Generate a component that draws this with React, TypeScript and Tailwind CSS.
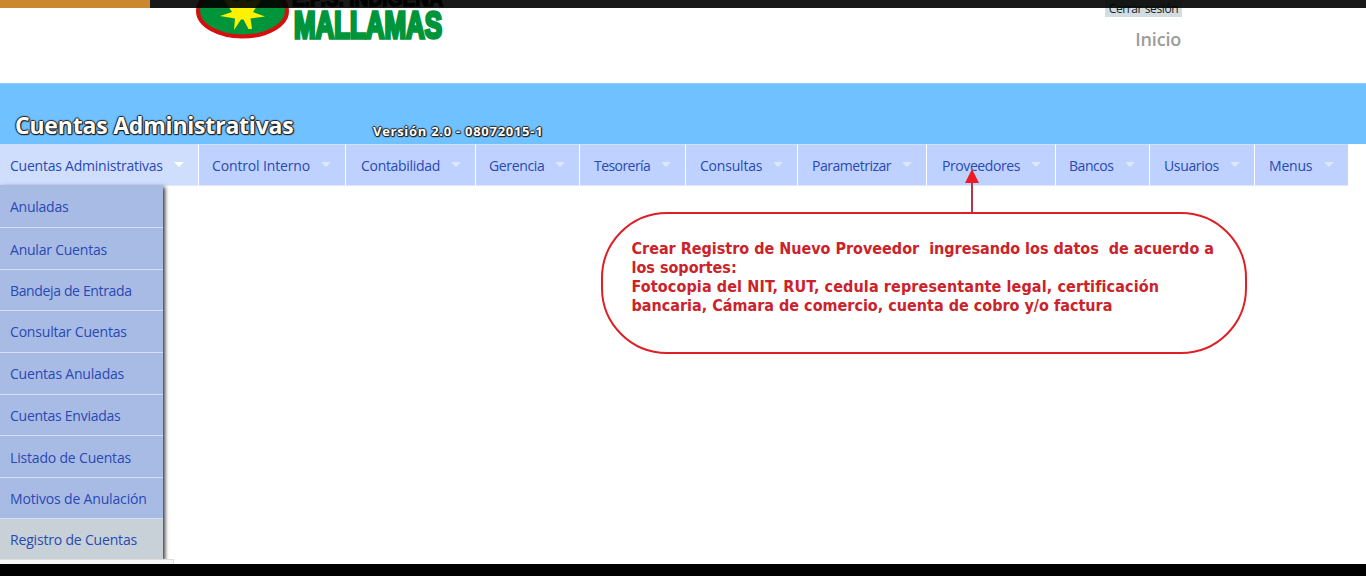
const menus = [
  { label: 'Cuentas Administrativas', cell: 'w-[199px] pl-[10px] bg-[#d0defe]', text: 'tracking-[-0.23px]', arrow: 'text-white' },
  { label: 'Control Interno', cell: 'w-[147px] pl-[13px] bg-[#bfd1fe]', text: 'tracking-[-0.15px]', arrow: 'text-[#dde8fd]' },
  { label: 'Contabilidad', cell: 'w-[130px] pl-[15px] bg-[#bfd1fe]', text: 'tracking-[-0.3px]', arrow: 'text-[#dde8fd]' },
  { label: 'Gerencia', cell: 'w-[104px] pl-[13px] bg-[#bfd1fe]', text: 'tracking-[-0.35px]', arrow: 'text-[#dde8fd]' },
  { label: 'Tesorería', cell: 'w-[106px] pl-[14px] bg-[#bfd1fe]', text: 'tracking-[-0.56px]', arrow: 'text-[#dde8fd]' },
  { label: 'Consultas', cell: 'w-[112px] pl-[14px] bg-[#bfd1fe]', text: 'tracking-[-0.2px]', arrow: 'text-[#dde8fd]' },
  { label: 'Parametrizar', cell: 'w-[129px] pl-[14px] bg-[#bfd1fe]', text: 'tracking-[-0.48px]', arrow: 'text-[#dde8fd]' },
  { label: 'Proveedores', cell: 'w-[129px] pl-[15px] bg-[#bfd1fe]', text: 'tracking-[-0.42px]', arrow: 'text-[#dde8fd]' },
  { label: 'Bancos', cell: 'w-[94px] pl-[13px] bg-[#bfd1fe]', text: 'tracking-[-0.45px]', arrow: 'text-[#dde8fd]' },
  { label: 'Usuarios', cell: 'w-[105px] pl-[14px] bg-[#bfd1fe]', text: 'tracking-[-0.35px]', arrow: 'text-[#dde8fd]' },
  { label: 'Menus', cell: 'w-[94px] pl-[14px] bg-[#bfd1fe]', text: 'tracking-[-0.2px]', arrow: 'text-[#dde8fd]' },
];

const entries = [
  { label: 'Anuladas', row: 'h-[43px] pt-px tracking-[-0.25px]' },
  { label: 'Anular Cuentas', row: 'h-[42px] pt-[2px] tracking-[-0.22px]' },
  { label: 'Bandeja de Entrada', row: 'h-[41px] tracking-[-0.36px]' },
  { label: 'Consultar Cuentas', row: 'h-[42px] tracking-[-0.19px]' },
  { label: 'Cuentas Anuladas', row: 'h-[42px] tracking-[-0.2px]' },
  { label: 'Cuentas Enviadas', row: 'h-[41px] tracking-[-0.26px]' },
  { label: 'Listado de Cuentas', row: 'h-[42px] pt-[2px] tracking-[-0.18px]' },
  { label: 'Motivos de Anulación', row: 'h-[41px] tracking-[-0.16px]' },
];

const outline =
  '[text-shadow:1px_0_1px_#222,-1px_0_1px_#222,0_1px_1px_#222,0_-1px_1px_#222,1px_1px_1px_#222]';

function Logo() {
  return (
    <svg width="270" height="50" viewBox="0 0 270 50" className="block">
      <ellipse cx="62.5" cy="11" rx="44.5" ry="25.5" fill="#00953b" stroke="#d80e0e" strokeWidth="4" />
      <path
        d="M62 -14L67 2L83 -3L73 12L85 16.500L70.500 18.500L72 29L68.500 29L63.500 19.500L61 19.500L54 30L55 18.500L40 16L52 12L42 -3L58 2Z"
        fill="#fff200"
      />
      <text
        x="112"
        y="5.5"
        textLength="151"
        lengthAdjust="spacingAndGlyphs"
        fill="#080808"
        stroke="#080808"
        strokeWidth="1.4"
        className="font-['Liberation_Sans',sans-serif] text-[22px] font-bold"
      >
        E.P.S. INDIGENA
      </text>
      <text
        x="114"
        y="38"
        textLength="148"
        lengthAdjust="spacingAndGlyphs"
        fill="#00953b"
        stroke="#00953b"
        strokeWidth="3.4"
        className="font-['Liberation_Sans',sans-serif] text-[37px] font-bold"
      >
        MALLAMAS
      </text>
    </svg>
  );
}

export default function App() {
  return (
    <div className="relative flex h-[576px] w-[1366px] flex-col overflow-hidden bg-white font-['Open_Sans','Noto_Sans',sans-serif]">
      <div className="absolute inset-x-0 top-0 z-10 flex h-2">
        <div className="w-[150px] bg-[#cc882c]" />
        <div className="flex-1 bg-black/90" />
      </div>

      <header className="flex h-[83px] shrink-0 justify-between pr-[184px] pl-[180px]">
        <Logo />
        <div className="flex flex-col items-end">
          <span className="flex h-[17px] w-[77px] items-end justify-center bg-[#d2dde1] text-[12px] leading-[17px] tracking-[-0.4px] whitespace-nowrap text-[#222]">
            Cerrar sesión
          </span>
          <span className="mt-[10px] mr-px text-[18px] leading-6 font-semibold tracking-[-0.2px] text-[#9c9c9c]">Inicio</span>
        </div>
      </header>

      <div className="flex h-[61px] shrink-0 border-t border-[#8acbfd] bg-[#6fc1ff] text-white">
        <h1 className={`w-[372px] shrink-0 pt-[25px] pl-[15px] text-[23px] leading-8 font-bold tracking-[-0.2px] whitespace-nowrap ${outline}`}>
          Cuentas Administrativas
        </h1>
        <span className={`pt-[37px] pl-[1px] text-[13px] leading-5 font-bold tracking-[0.72px] whitespace-nowrap ${outline}`}>
          Versión 2.0 - 08072015-1
        </span>
      </div>

      <nav className="flex h-[42px] shrink-0 text-[14px] text-[#2949b4]">
        {menus.map((m) => (
          <div
            key={m.label}
            className={`flex shrink-0 items-center justify-between border-t border-r border-b border-t-[#cfe0fb] border-r-white border-b-[#e0e9ff] pt-px pr-[14px] ${m.cell}`}
          >
            <span className={`whitespace-nowrap ${m.text}`}>{m.label}</span>
            <svg width="10" height="5" viewBox="0 0 10 5" className={`mb-[3px] shrink-0 ${m.arrow}`}>
              <path d="M0 0H10L5 5Z" fill="currentColor" />
            </svg>
          </div>
        ))}
      </nav>

      <main className="-mt-px flex h-[379px] shrink-0">
        <aside className="z-0 h-[374px] w-[163px] bg-[#a8bbe5] text-[14px] text-[#2949b4] shadow-[2px_2px_4px_#333]">
          {entries.map((e) => (
            <div key={e.label} className={`flex items-center border-b border-[#d3dff8] pl-[10px] whitespace-nowrap ${e.row}`}>
              {e.label}
            </div>
          ))}
          <div className="flex h-[40px] items-center bg-[#c7d1d7] pl-[10px] tracking-[-0.18px] whitespace-nowrap">Registro de Cuentas</div>
          <div className="h-[5px] w-[174px] border-t border-r border-[#ddd] bg-[#f7f7f7]" />
        </aside>
      </main>
      <footer className="h-3 shrink-0 bg-black" />

      <div className="absolute top-[168px] left-[601px] w-[646px] text-[#cc2229]">
        <svg width="16" height="44" viewBox="0 0 16 44" className="ml-[363px] block">
          <path d="M7 14H9V44H7Z" fill="#b23b43" />
          <path d="M8 1L15 15H1Z" fill="#ed1c24" />
        </svg>
        <div className="h-[142px] rounded-[66px] border-2 border-[#e01e26] px-[28.5px] pt-[25px] font-['DejaVu_Sans_Condensed','DejaVu_Sans',sans-serif] text-[16px] leading-[19px] font-bold whitespace-pre">
          <p className="tracking-[-0.01px]">Crear Registro de Nuevo Proveedor  ingresando los datos  de acuerdo a</p>
          <p>los soportes:</p>
          <p className="tracking-[0.11px]">Fotocopia del NIT, RUT, cedula representante legal, certificación</p>
          <p>bancaria, Cámara de comercio, cuenta de cobro y/o factura</p>
        </div>
      </div>
    </div>
  );
}
